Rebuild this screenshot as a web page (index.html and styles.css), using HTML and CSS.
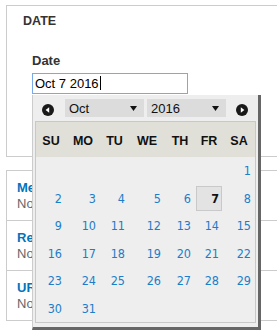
FILE: index.html
```html
<!DOCTYPE html>
<html>
  <head>
    <title>Date field</title>
    <link rel="stylesheet" href="styles.css">
  </head>
  <body>
    <div class="page">
      <section class="card date-card">
        <h2 class="card-title">DATE</h2>
        <div class="field">
          <label class="field-label" for="date">Date</label>
          <div class="input-wrap">
            <div class="input" id="date">Oct 7 2016<span class="caret"></span></div>

            <div class="datepicker">
              <div class="dp-header">
                <a class="dp-nav" href="#" title="Prev">
                  <svg width="12" height="12" viewBox="0 0 12 12"><circle cx="6" cy="6" r="6" fill="#1a1a1a"/><path d="M3.6 6 L7.2 3.2 V8.8 Z" fill="#fff"/></svg>
                </a>
                <div class="dp-select dp-month">
                  <span>Oct</span>
                  <svg width="7" height="5" viewBox="0 0 7 5"><path d="M0 0 H7 L3.5 5 Z" fill="#111"/></svg>
                </div>
                <div class="dp-select dp-year">
                  <span>2016</span>
                  <svg width="7" height="5" viewBox="0 0 7 5"><path d="M0 0 H7 L3.5 5 Z" fill="#111"/></svg>
                </div>
                <a class="dp-nav dp-next" href="#" title="Next">
                  <svg width="12" height="12" viewBox="0 0 12 12"><circle cx="6" cy="6" r="6" fill="#1a1a1a"/><path d="M8.4 6 L4.8 3.2 V8.8 Z" fill="#fff"/></svg>
                </a>
              </div>
              <div class="dp-panel">
                <table class="dp-table">
                  <thead>
                    <tr><th>SU</th><th>MO</th><th>TU</th><th>WE</th><th>TH</th><th>FR</th><th>SA</th></tr>
                  </thead>
                  <tbody>
                    <tr><td></td><td></td><td></td><td></td><td></td><td></td><td><a class="dp-day" href="#">1</a></td></tr>
                    <tr><td><a class="dp-day" href="#">2</a></td><td><a class="dp-day" href="#">3</a></td><td><a class="dp-day" href="#">4</a></td><td><a class="dp-day" href="#">5</a></td><td><a class="dp-day" href="#">6</a></td><td><a class="dp-day active" href="#">7</a></td><td><a class="dp-day" href="#">8</a></td></tr>
                    <tr><td><a class="dp-day" href="#">9</a></td><td><a class="dp-day" href="#">10</a></td><td><a class="dp-day" href="#">11</a></td><td><a class="dp-day" href="#">12</a></td><td><a class="dp-day" href="#">13</a></td><td><a class="dp-day" href="#">14</a></td><td><a class="dp-day" href="#">15</a></td></tr>
                    <tr><td><a class="dp-day" href="#">16</a></td><td><a class="dp-day" href="#">17</a></td><td><a class="dp-day" href="#">18</a></td><td><a class="dp-day" href="#">19</a></td><td><a class="dp-day" href="#">20</a></td><td><a class="dp-day" href="#">21</a></td><td><a class="dp-day" href="#">22</a></td></tr>
                    <tr><td><a class="dp-day" href="#">23</a></td><td><a class="dp-day" href="#">24</a></td><td><a class="dp-day" href="#">25</a></td><td><a class="dp-day" href="#">26</a></td><td><a class="dp-day" href="#">27</a></td><td><a class="dp-day" href="#">28</a></td><td><a class="dp-day" href="#">29</a></td></tr>
                    <tr><td><a class="dp-day" href="#">30</a></td><td><a class="dp-day" href="#">31</a></td><td></td><td></td><td></td><td></td><td></td></tr>
                  </tbody>
                </table>
              </div>
            </div>
          </div>
        </div>
      </section>

      <section class="card details">
        <div class="detail">
          <a class="detail-title" href="#">Menu settings</a>
          <div class="detail-summary">Not in menu</div>
        </div>
        <div class="detail">
          <a class="detail-title" href="#">Revision information</a>
          <div class="detail-summary">No revision</div>
        </div>
        <div class="detail">
          <a class="detail-title" href="#">URL path settings</a>
          <div class="detail-summary">No alias</div>
        </div>
      </section>
    </div>
  </body>
</html>
```

FILE: styles.css
```css
html,
body {
  margin: 0;
  height: 100%;
  overflow: hidden;
  background: #fff;
  font-family: "Liberation Sans", Arial, sans-serif;
  color: #333;
}
.page {
  width: 330px;
  padding: 5px 0 0 6px;
}
.card {
  border: 1px solid #ccc;
  background: #fff;
}

/* date card */
.date-card {
  padding: 8px 16px 62px;
}
.card-title {
  margin: 0;
  font-size: 12.5px;
  line-height: 15px;
  font-weight: bold;
  color: #333;
}
.field {
  margin: 24px 0 0 9px;
}
.field-label {
  display: block;
  margin-bottom: 4px;
  font-size: 13px;
  line-height: 16px;
  font-weight: bold;
  color: #333;
}
.input-wrap {
  position: relative;
}
.input {
  box-sizing: border-box;
  width: 156px;
  height: 21px;
  padding: 0 2px;
  border: 1px solid #78a9e8;
  font-size: 13px;
  line-height: 19px;
  color: #000;
}
.caret {
  display: inline-block;
  width: 1px;
  height: 14px;
  margin-left: 1px;
  background: #000;
  vertical-align: -2px;
}

/* datepicker popup */
.datepicker {
  position: absolute;
  left: 0;
  top: calc(100% + 1px);
  z-index: 2;
  background: #eee;
  border-left: 1px solid #ccc;
  border-right: 3px solid #666;
  border-bottom: 3px solid #666;
  padding-bottom: 4px;
}
.dp-header {
  display: flex;
  align-items: center;
  height: 26px;
  padding-left: 9px;
}
.dp-nav {
  display: block;
  width: 12px;
  height: 12px;
  margin-top: 4px;
}
.dp-nav svg { display: block; }
.dp-next { margin-left: 10px; }
.dp-select {
  box-sizing: border-box;
  display: flex;
  align-items: center;
  justify-content: space-between;
  width: 79px;
  height: 18px;
  padding: 0 7px 0 4px;
  background: #dcdcdc;
  font-size: 13px;
  color: #111;
}
.dp-month { margin-left: 11px; }
.dp-year { margin-left: 3px; }
.dp-panel {
  margin: 0 2px;
  border: 1px solid #c8c8c8;
}
.dp-table {
  border-collapse: collapse;
  table-layout: fixed;
  width: 219px;
}
.dp-table th {
  height: 32px;
  padding: 3px 0 0;
  background: #e0e0d9;
  font-size: 12.5px;
  font-weight: bold;
  color: #111;
  text-align: center;
}
.dp-table th:nth-child(1) { width: 30px; }
.dp-table th:nth-child(2) { width: 34px; }
.dp-table th:nth-child(3) { width: 29px; }
.dp-table th:nth-child(4) { width: 36px; }
.dp-table th:nth-child(5) { width: 30px; }
.dp-table th:nth-child(6) { width: 28px; }
.dp-table th:nth-child(7) { width: 32px; }
.dp-table td {
  padding: 1px;
}
.dp-day {
  display: block;
  box-sizing: border-box;
  height: 25.5px;
  padding-right: 2px;
  border: 1px solid transparent;
  font-family: "DejaVu Sans Condensed", "DejaVu Sans", sans-serif;
  font-stretch: condensed;
  font-size: 12.5px;
  line-height: 23.5px;
  color: #1c7dc9;
  text-align: right;
  text-decoration: none;
}
.dp-day.active {
  background: #e3e3e3;
  border-color: #c9c9c9;
  color: #111;
  font-weight: bold;
}

/* details card */
.details {
  margin-top: 13px;
}
.detail {
  padding: 9px 10px 8px;
  border-bottom: 1px solid #ccc;
}
.detail:last-child {
  border-bottom: 0;
}
.detail-title {
  display: block;
  font-size: 13px;
  line-height: 16px;
  font-weight: bold;
  color: #0074bd;
  text-decoration: none;
}
.detail-summary {
  font-size: 13px;
  line-height: 16px;
  color: #666;
}
```
